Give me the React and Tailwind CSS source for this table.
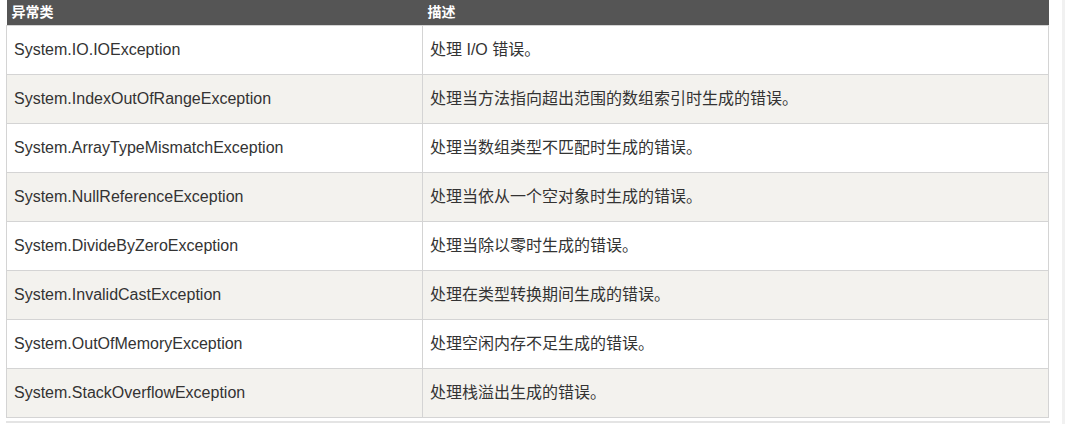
import React from 'react';

const rows = [
  ['System.IO.IOException', '处理 I/O 错误。'],
  ['System.IndexOutOfRangeException', '处理当方法指向超出范围的数组索引时生成的错误。'],
  ['System.ArrayTypeMismatchException', '处理当数组类型不匹配时生成的错误。'],
  ['System.NullReferenceException', '处理当依从一个空对象时生成的错误。'],
  ['System.DivideByZeroException', '处理当除以零时生成的错误。'],
  ['System.InvalidCastException', '处理在类型转换期间生成的错误。'],
  ['System.OutOfMemoryException', '处理空闲内存不足生成的错误。'],
  ['System.StackOverflowException', '处理栈溢出生成的错误。'],
];

export default function App() {
  return (
    <div
      className="relative w-[1065px] h-[424px] bg-white overflow-hidden"
      style={{ fontFamily: '"Liberation Sans", Arial, "Noto Sans CJK SC", sans-serif' }}
    >
      <div className="absolute right-0 top-0 w-[3px] h-full bg-[#f1f1f1]" />
      <div className="pl-[6px]">
        <table className="w-[1043px] border-collapse table-fixed">
          <colgroup>
            <col className="w-[416px]" />
            <col />
          </colgroup>
          <thead>
            <tr className="bg-[#555555] h-[25px]">
              <th className="text-left text-white font-bold text-[14px] px-[5px] align-middle">异常类</th>
              <th className="text-left text-white font-bold text-[14px] px-[5px] align-middle">描述</th>
            </tr>
          </thead>
          <tbody>
            {rows.map(([name, desc], i) => (
              <tr key={name} className={i % 2 === 0 ? 'bg-white h-[49px]' : 'bg-[#f3f2ee] h-[49px]'}>
                <td className="border border-[#d4d4d4] px-[7px] text-[16px] text-[#333333] align-middle">{name}</td>
                <td className="border border-[#d4d4d4] px-[7px] text-[16px] text-[#333333] align-middle">{desc}</td>
              </tr>
            ))}
          </tbody>
        </table>
        <div className="mt-[3px] w-[1044px] h-[2px] bg-[#e4e4e4]" />
      </div>
    </div>
  );
}
